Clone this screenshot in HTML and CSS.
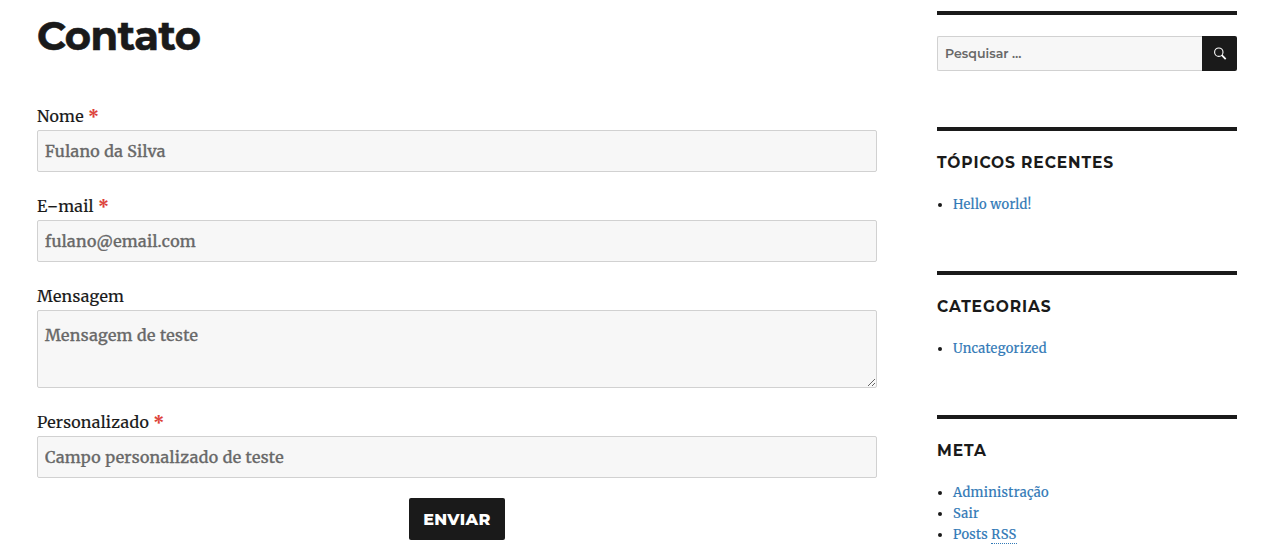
FILE: index.html
```html
<!DOCTYPE html>
<html lang="pt-BR">
<head>
  <meta charset="UTF-8">
  <meta name="viewport" content="width=device-width, initial-scale=1.0">
  <title>Contato</title>
  <link rel="stylesheet" href="styles.css">
</head>
<body>
  <div class="site-content">
    <main class="content-area">
      <h1 class="entry-title">Contato</h1>

      <form class="contact-form">
        <div class="form-group">
          <label for="nome">Nome <span class="required">*</span></label>
          <input type="text" id="nome" class="form-control" placeholder="Fulano da Silva">
        </div>

        <div class="form-group">
          <label for="email">E<span class="hyphen">-</span>mail <span class="required">*</span></label>
          <input type="email" id="email" class="form-control" placeholder="fulano@email.com">
        </div>

        <div class="form-group">
          <label for="mensagem">Mensagem</label>
          <textarea id="mensagem" class="form-control" placeholder="Mensagem de teste"></textarea>
        </div>

        <div class="form-group">
          <label for="personalizado">Personalizado <span class="required">*</span></label>
          <input type="text" id="personalizado" class="form-control" placeholder="Campo personalizado de teste">
        </div>

        <button type="button" class="submit-btn">Enviar</button>
      </form>
    </main>

    <aside class="sidebar">
      <section class="widget">
        <form class="search-form">
          <input type="search" class="search-field" placeholder="Pesquisar …">
          <button type="button" class="search-submit" aria-label="Pesquisar">
            <svg width="14" height="14" viewBox="0 0 14 14" fill="none" stroke="#fff">
              <circle cx="5.8" cy="5.2" r="4.2" stroke-width="1.1"/>
              <path d="M8.8 8.2L12.7 12.1" stroke-width="1.8"/>
            </svg>
          </button>
        </form>
      </section>

      <section class="widget">
        <h2 class="widget-title">Tópicos recentes</h2>
        <ul>
          <li><a href="#">Hello world!</a></li>
        </ul>
      </section>

      <section class="widget">
        <h2 class="widget-title">Categorias</h2>
        <ul>
          <li><a href="#">Uncategorized</a></li>
        </ul>
      </section>

      <section class="widget">
        <h2 class="widget-title">Meta</h2>
        <ul>
          <li><a href="#">Administração</a></li>
          <li><a href="#">Sair</a></li>
          <li><a href="#">Posts <abbr title="Really Simple Syndication">RSS</abbr></a></li>
        </ul>
      </section>
    </aside>
  </div>
</body>
</html>
```

FILE: styles.css
```css
* {
  box-sizing: border-box;
}

body {
  margin: 0;
  background-color: #fff;
  color: #1a1a1a;
  font-family: Merriweather, "DejaVu Serif Condensed", "DejaVu Serif", serif;
  font-size: 16px;
  line-height: 28px;
}

.site-content {
  display: flex;
  justify-content: space-between;
  padding: 11px 33px 0 37px;
}

.content-area {
  width: 840px;
}

.entry-title {
  margin: 0 0 42px;
  font-family: Montserrat, Inter, sans-serif;
  font-size: 40px;
  font-weight: 700;
  letter-spacing: -0.4px;
  line-height: 49px;
  -webkit-text-stroke: 0.6px #1a1a1a;
}

.form-group {
  margin-bottom: 20px;
}

label {
  display: block;
  letter-spacing: 0.25px;
  -webkit-text-stroke: 0.15px;
}

.hyphen {
  display: inline-block;
  margin: 0 0.6px;
  transform: scaleX(1.3);
}

.required {
  margin-left: 0.5px;
  color: #dd3d36;
  font-weight: bold;
  -webkit-text-stroke: 0.2px #dd3d36;
}

.form-control {
  display: block;
  width: 100%;
  height: 42px;
  padding: 0 7px;
  border: 1px solid #d1d1d1;
  border-radius: 2px;
  background-color: #f7f7f7;
  color: #686868;
  font: inherit;
  letter-spacing: 0.34px;
}

textarea.form-control {
  height: 78px;
  padding: 10px 7px;
  resize: vertical;
}

::placeholder {
  color: #686868;
  opacity: 1;
}

.form-control::placeholder {
  -webkit-text-stroke: 0.35px #686868;
}

.submit-btn {
  display: block;
  width: 96px;
  height: 42px;
  margin: 0 auto;
  padding: 0;
  border: 0;
  border-radius: 2px;
  background-color: #1a1a1a;
  color: #fff;
  font-family: Montserrat, Inter, sans-serif;
  font-size: 16px;
  font-weight: 800;
  letter-spacing: 0.4px;
  text-transform: uppercase;
}

.sidebar {
  width: 300px;
  font-size: 13px;
  line-height: 21px;
}

.widget {
  margin-bottom: 56px;
  padding-top: 21px;
  border-top: 4px solid #1a1a1a;
}

.widget:last-child {
  margin-bottom: 0;
}

.widget-title {
  margin: 0 0 21px;
  font-family: Montserrat, Inter, sans-serif;
  font-size: 15.5px;
  font-weight: 700;
  letter-spacing: 0.9px;
  line-height: 21px;
  text-transform: uppercase;
}

.widget ul {
  margin: 0;
  padding-left: 16px;
}

.widget a {
  color: #337ab7;
  letter-spacing: 0.28px;
  text-decoration: none;
  -webkit-text-stroke: 0.15px;
}

abbr {
  border-bottom: 1px dotted #337ab7;
  text-decoration: none;
}

.search-form {
  display: flex;
}

.search-field {
  flex: 1;
  min-width: 0;
  height: 35px;
  padding: 0 7px 1px;
  border: 1px solid #d1d1d1;
  border-right: 0;
  border-radius: 2px 0 0 2px;
  background-color: #f7f7f7;
  font-family: Montserrat, Inter, sans-serif;
  font-size: 12.6px;
  font-weight: 600;
}

.search-submit {
  display: flex;
  align-items: center;
  justify-content: center;
  width: 35px;
  height: 35px;
  padding: 0;
  border: 0;
  border-radius: 0 2px 2px 0;
  background-color: #1a1a1a;
}
```
